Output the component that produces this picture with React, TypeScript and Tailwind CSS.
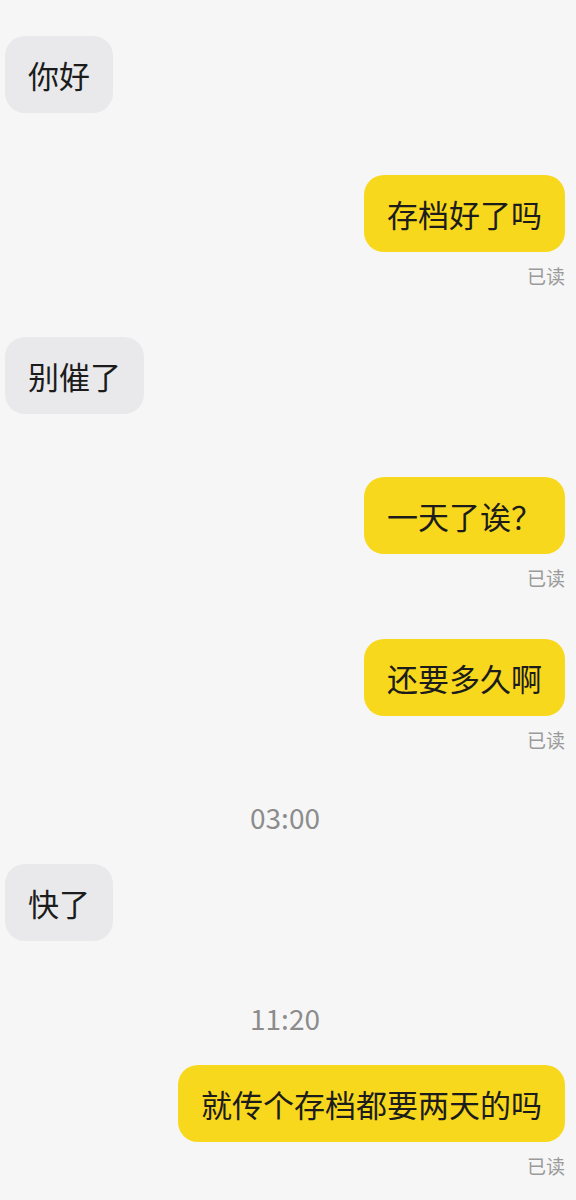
type Item =
  | { kind: 'in'; text: string; gap: string }
  | { kind: 'out'; text: string; gap: string; read?: boolean }
  | { kind: 'time'; text: string; gap: string };

// gap = full class name for the space above each row
const items: Item[] = [
  { kind: 'in', text: '你好', gap: 'mt-[36px]' },
  { kind: 'out', text: '存档好了吗', gap: 'mt-[62px]', read: true },
  { kind: 'in', text: '别催了', gap: 'mt-[49px]' },
  { kind: 'out', text: '一天了诶？', gap: 'mt-[63px]', read: true },
  { kind: 'out', text: '还要多久啊', gap: 'mt-[49px]', read: true },
  { kind: 'time', text: '03:00', gap: 'mt-[48px]' },
  { kind: 'in', text: '快了', gap: 'mt-[30px]' },
  { kind: 'time', text: '11:20', gap: 'mt-[60px]' },
  { kind: 'out', text: '就传个存档都要两天的吗', gap: 'mt-[30px]', read: true },
];

function Bubble({ text, mine }: { text: string; mine: boolean }) {
  return (
    <div
      className={`h-[77px] px-[23px] flex items-center rounded-[20px] text-[31px] leading-none text-[#1c1c1c] ${
        mine ? 'bg-[#f8d81c]' : 'bg-[#e9e9eb]'
      }`}
    >
      {text}
    </div>
  );
}

export default function App() {
  return (
    <div className="w-[576px] h-[1200px] overflow-hidden bg-[#f6f6f6] pl-[5px] pr-[11px] flex flex-col font-['Noto_Sans_CJK_SC','Noto_Sans',sans-serif]">
      {items.map((it, i) => {
        if (it.kind === 'time') {
          return (
            <div key={i} className={`${it.gap} text-center text-[28px] leading-[34px] text-[#8c8c8c]`}>
              {it.text}
            </div>
          );
        }
        if (it.kind === 'in') {
          return (
            <div key={i} className={`${it.gap} flex justify-start`}>
              <Bubble text={it.text} mine={false} />
            </div>
          );
        }
        return (
          <div key={i} className={`${it.gap} flex flex-col items-end`}>
            <Bubble text={it.text} mine />
            {it.read && (
              <div className="mt-[12px] text-[19px] leading-[24px] text-[#9a9a9a]">已读</div>
            )}
          </div>
        );
      })}
    </div>
  );
}
